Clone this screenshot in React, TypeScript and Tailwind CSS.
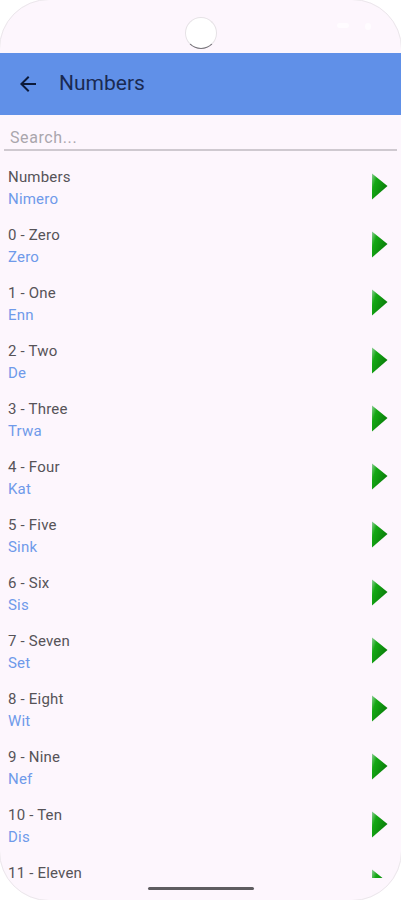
const rows = [
  ["Numbers", "Nimero"],
  ["0 - Zero", "Zero"],
  ["1 - One", "Enn"],
  ["2 - Two", "De"],
  ["3 - Three", "Trwa"],
  ["4 - Four", "Kat"],
  ["5 - Five", "Sink"],
  ["6 - Six", "Sis"],
  ["7 - Seven", "Set"],
  ["8 - Eight", "Wit"],
  ["9 - Nine", "Nef"],
  ["10 - Ten", "Dis"],
  ["11 - Eleven", ""],
];

const PlayIcon = ({ id }: { id: number }) => (
  <svg width="18" height="27" viewBox="0 0 18 27" className="mb-[3px]">
    <defs>
      <linearGradient id={`g${id}`} x1="0" y1="0" x2="1" y2="0.6">
        <stop offset="0" stopColor="#8fcf98" />
        <stop offset="0.3" stopColor="#14a814" />
        <stop offset="1" stopColor="#0a7a0a" />
      </linearGradient>
    </defs>
    <path d="M1 0.5 L16.5 13 L1 26.5 Z" fill={`url(#g${id})`} />
  </svg>
);

export default function App() {
  return (
    <div className="relative flex h-[900px] w-[401px] flex-col overflow-hidden bg-[#fdf6fd] font-['Roboto',sans-serif]">
      {/* status bar, icons almost washed out */}
      <div className="grid h-[53px] grid-cols-[185px_32px_1fr] pt-[17px]">
        <div />
        <div className="h-8 w-8 rounded-full border border-[#e6e2e6] border-b-[#77747a] bg-white" />
        <div className="flex items-start gap-4 pl-[120px] pt-[6px]">
          <div className="h-[5px] w-3 rounded-sm bg-white/70" />
          <div className="h-[7px] w-[6px] rounded-sm bg-white/70" />
        </div>
      </div>
      <div className="flex h-[62px] items-center bg-[#6090e8] pl-4">
        <svg width="24" height="24" viewBox="0 0 24 24" fill="#0c1a3a">
          <path d="M20 11H7.83l5.59-5.59L12 4l-8 8 8 8 1.41-1.41L7.83 13H20v-2z" />
        </svg>
        <span className="ml-[19px] text-[21px] text-[#1a2a52]">Numbers</span>
      </div>
      <div className="mx-1 mt-[3px] h-[33px] border-b-2 border-[#cfc9d0] pl-[6px] pt-[8px] text-[16px] leading-[24px] tracking-[0.6px] text-[#aaa6ad]">
        Search...
      </div>
      <div className="mt-[8px] h-[719px] overflow-hidden">
        {rows.map(([title, sub], i) => (
          <div key={title} className="flex h-[58px] items-center justify-between pl-2 pr-[12px]">
            <div className="flex flex-col text-[15px] leading-[22px] tracking-[0.2px]">
              <span className="text-[#565358]">{title}</span>
              <span className="h-[22px] text-[#6f9aea]">{sub}</span>
            </div>
            <PlayIcon id={i} />
          </div>
        ))}
      </div>
      {/* home bar */}
      <div className="flex flex-1 justify-center pt-[9px]">
        <div className="h-[3px] w-[106px] rounded-full bg-[#5e5c60]" />
      </div>
      {/* phone frame */}
      <div className="pointer-events-none absolute inset-[-1px] rounded-[50px] border border-[#ebe7eb] shadow-[0_0_0_60px_white]" />
    </div>
  );
}
